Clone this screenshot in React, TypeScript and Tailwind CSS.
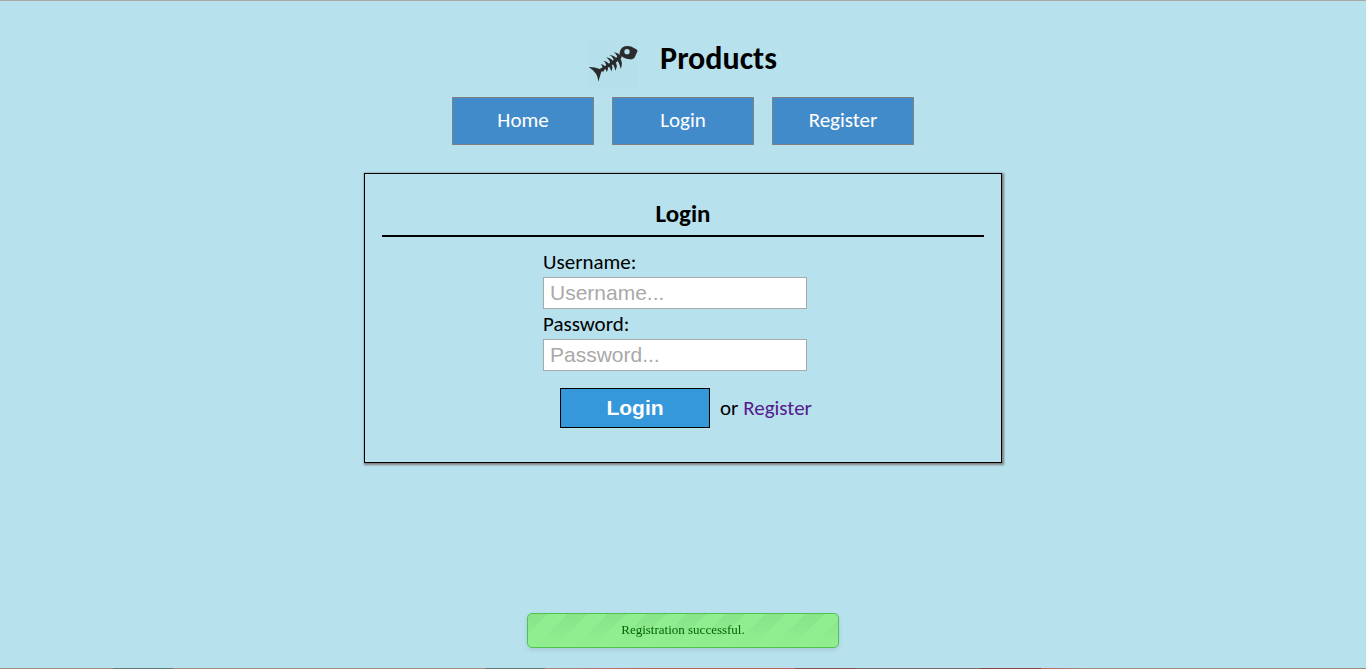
import type { ReactNode } from "react";

const navItems = ["Home", "Login", "Register"];

function FishBone() {
  return (
    <svg viewBox="30 12 147 147" className="size-[49px] bg-[#b4dfeb]" aria-hidden="true">
      <g fill="#2b2b2e">
        <path d="M29 96 Q47 96 65 103 Q69 107 66 113 Q62 127 58 140 Q56 122 49 114 Q42 104 29 96Z" />
        <path d="M122 58 Q121 46 131 37 Q142 30 158 35 L174 44 Q177 47 174 52 L166 69 Q160 74 152 73 Q132 72 122 58Z" />
        <path d="M62 102 Q95 86 123 58 L129 66 Q98 93 66 110Z" />
        <path d="M66 87 Q80 90 79 102 L71 104 Q72 95 66 87Z" />
        <path d="M74 77 Q93 81 91 96 L81 98 Q84 87 74 77Z" />
        <path d="M82 67 Q105 72 104 88 L93 91 Q96 78 82 67Z" />
        <path d="M91 59 Q116 63 115 80 L105 84 Q107 69 91 59Z" />
        <path d="M104 52 Q126 54 126 71 L115 74 Q117 61 104 52Z" />
        <path d="M76 98 L85 94 Q90 101 83 111 Q82 103 76 98Z" />
        <path d="M87 92 L96 87 Q104 96 97 109 Q95 98 87 92Z" />
        <path d="M98 84 L108 78 Q118 91 109 107 Q106 91 98 84Z" />
        <path d="M112 74 L121 67 Q134 82 125 102 Q122 82 112 74Z" />
        <path d="M66 103 L74 99 Q78 105 72 112Z" />
      </g>
      <ellipse cx="144" cy="50" rx="8" ry="8" fill="#b4dfeb" />
    </svg>
  );
}

function Field({ id, type, label }: { id: string; type: string; label: string }) {
  return (
    <div className="flex flex-col">
      <label htmlFor={id} className="text-[21px] leading-[30px]">
        {label}:
      </label>
      <input
        id={id}
        type={type}
        placeholder={`${label}...`}
        className="h-8 w-full border border-[#a9a9a9] bg-white px-1.5 font-['Liberation_Sans',sans-serif] text-[21px] text-black placeholder:text-[#a9a9a9]"
      />
    </div>
  );
}

function Panel({ title, children }: { title: string; children: ReactNode }) {
  return (
    <section className="mx-auto mt-7 w-full max-w-[638px] border border-black px-[17px] pt-6 pb-[34px] shadow-[1px_1px_2px_1px_#808080]">
      <h2 className="border-b-2 border-black pb-[5px] text-center text-[25px] leading-8 font-bold">{title}</h2>
      {children}
    </section>
  );
}

export default function App() {
  return (
    <div className="flex min-h-screen flex-col border-t border-[#a9a9a9] bg-[#b7e1ed] font-[Carlito,Lato,sans-serif] text-black">
      <header className="pt-[38px]">
        <div className="flex justify-center gap-[22px]">
          <FishBone />
          <h1 className="text-[32px] leading-10 font-bold">Products</h1>
        </div>
        <nav className="mt-[9px] flex flex-wrap justify-center gap-[18px]">
          {navItems.map((item) => (
            <a
              key={item}
              href="#"
              className="flex h-12 w-[142px] items-center justify-center border border-[#808080] bg-[#428bca] text-[21px] text-white"
            >
              {item}
            </a>
          ))}
        </nav>
      </header>

      <main className="grow">
        <Panel title="Login">
          <form className="mx-auto mt-2.5 w-full max-w-[280px]">
            <div className="w-[264px]">
              <Field id="username" type="text" label="Username" />
              <Field id="password" type="password" label="Password" />
            </div>
            <div className="mt-[17px] flex items-center gap-2.5 pl-[17px]">
              <button
                type="button"
                className="h-10 w-[150px] border border-black bg-[#3498db] font-['Liberation_Sans',sans-serif] text-[21px] font-bold text-white"
              >
                Login
              </button>
              <p className="text-[21px] leading-10 whitespace-nowrap">
                or{" "}
                <a href="#" className="text-[#551a8b]">
                  Register
                </a>
              </p>
            </div>
          </form>
        </Panel>
      </main>

      <div
        role="status"
        className="fixed bottom-[21px] left-1/2 w-[312px] -translate-x-1/2 rounded-[5px] border border-[#50c24e] bg-[linear-gradient(180deg,rgba(144,238,144,0)_0%,rgba(144,238,144,1)_100%),repeating-linear-gradient(135deg,#8ae48a_0_14px,#90ee90_14px_28px)] pt-[7px] pb-[9px] text-center font-['Liberation_Serif',serif] text-[13px] leading-[17px] text-[darkgreen] shadow-[0_2px_4px_rgba(0,0,0,0.1)]"
      >
        Registration successful.
      </div>

      <footer className="h-px bg-[linear-gradient(90deg,#a08a78_0_113px,#5f7a78_113px_173px,#a08a78_173px_485px,#6b7a78_485px_545px,#a5877a_545px,#c0605c_650px_795px,#8a5050_795px_856px,#7a6a68_856px_980px,#8a4448_980px_1041px,#c0605c_1041px,#a08a78_1083px)]" />
    </div>
  );
}
